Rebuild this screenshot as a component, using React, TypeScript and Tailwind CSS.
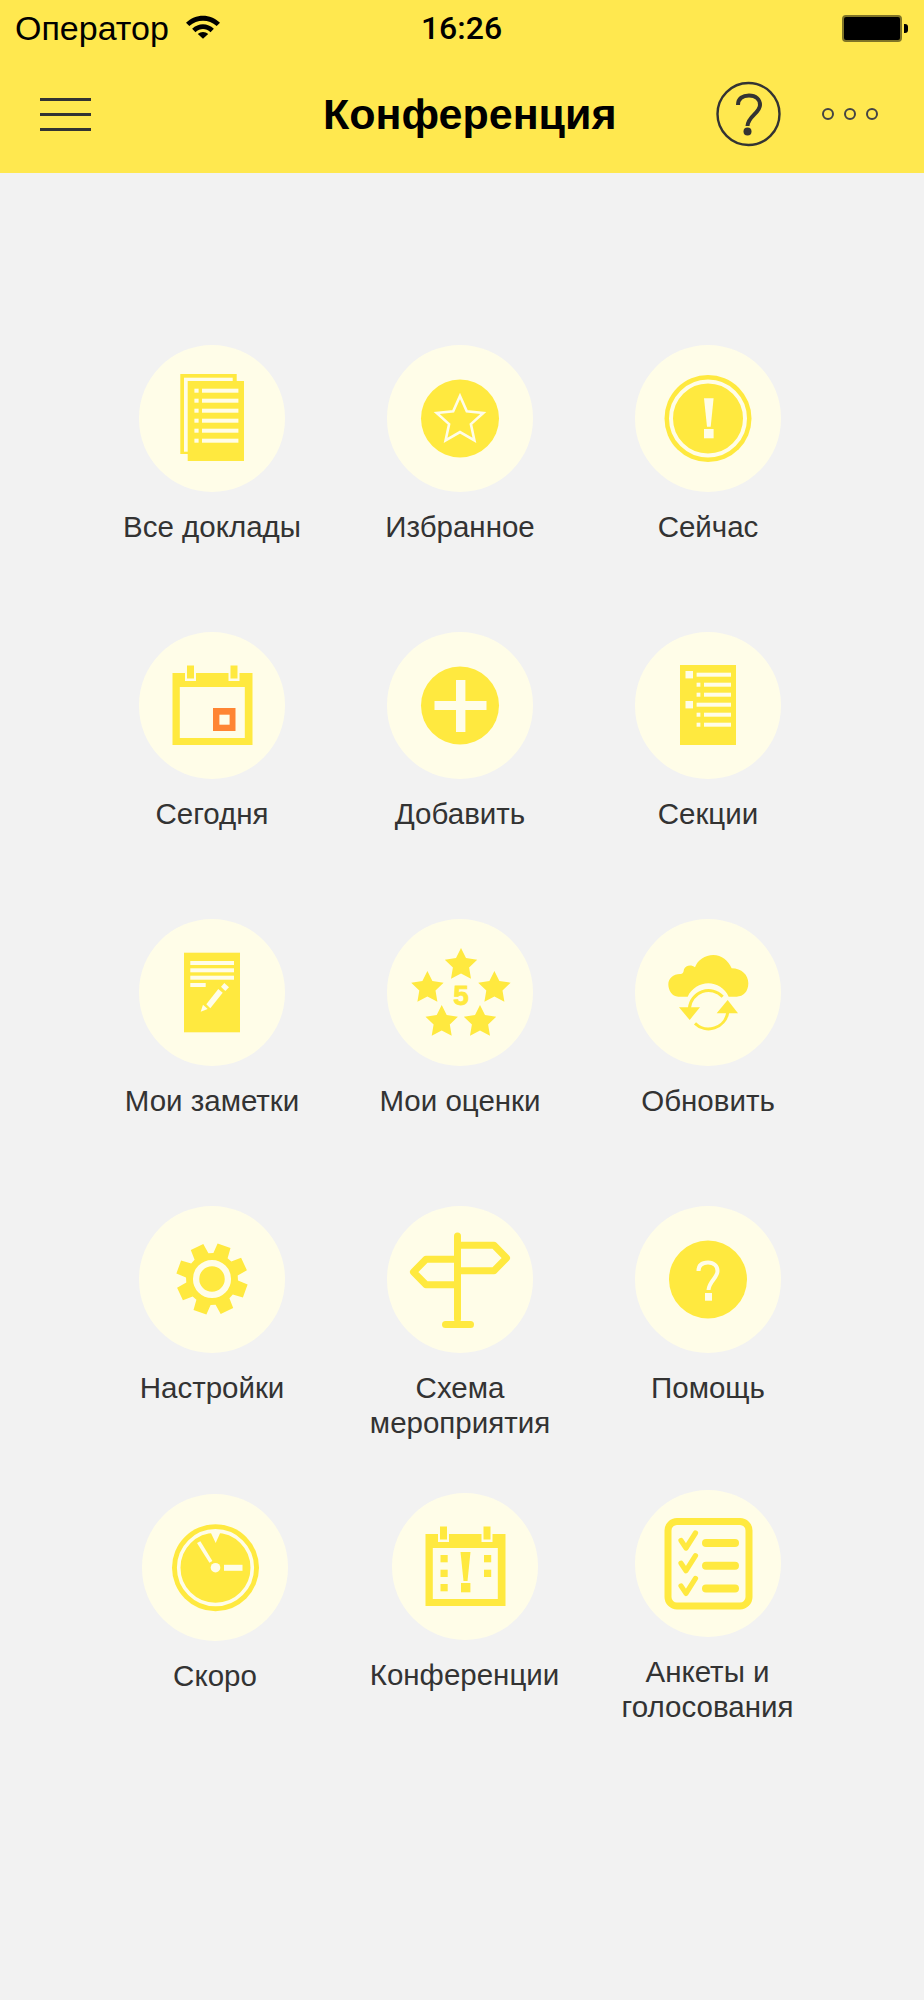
import React from "react";

const Y = "#FFE93F";
const C = "#FFFDE8";

function starPts(cx: number, cy: number, R: number, r: number) {
  const p: string[] = [];
  for (let i = 0; i < 10; i++) {
    const a = (-90 + i * 36) * (Math.PI / 180);
    const rad = i % 2 === 0 ? R : r;
    p.push(`${(cx + rad * Math.cos(a)).toFixed(1)},${(cy + rad * Math.sin(a)).toFixed(1)}`);
  }
  return p.join(" ");
}

function gearPath(cx: number, cy: number) {
  const n = 8;
  const out: string[] = [];
  for (let i = 0; i < n; i++) {
    const base = -70 + (i * 360) / n;
    const pts: [number, number][] = [
      [26, base - 17],
      [36, base - 11],
      [36, base + 11],
      [26, base + 17],
    ];
    for (const [r, d] of pts) {
      const a = (d * Math.PI) / 180;
      out.push(`${(cx + r * Math.cos(a)).toFixed(1)} ${(cy + r * Math.sin(a)).toFixed(1)}`);
    }
  }
  return "M" + out.join("L") + "Z";
}

const Svg = ({ children }: { children: React.ReactNode }) => (
  <svg viewBox="0 0 146 147" className="w-full h-full">{children}</svg>
);

const lines = [45.7, 55.7, 65.7, 75.7, 85.7, 95.7];

const AllIcon = () => (
  <Svg>
    <rect x="41.3" y="29" width="56.4" height="80" fill={Y} />
    <rect x="45" y="32.7" width="48.7" height="74" fill={C} />
    <rect x="48.7" y="36" width="56.3" height="80" fill={Y} />
    {lines.map((y) => (
      <g key={y} fill={C}>
        <rect x="55.4" y={y - 2} width="4.2" height="4" />
        <rect x="63" y={y - 2} width="36.4" height="4" />
      </g>
    ))}
  </Svg>
);

const FavIcon = () => (
  <Svg>
    <circle cx="73" cy="73.5" r="39" fill={Y} />
    <polygon points={starPts(73, 75.5, 24.5, 11.5)} fill="none" stroke={C} strokeWidth="2.6" />
  </Svg>
);

const NowIcon = () => (
  <Svg>
    <circle cx="73" cy="73.5" r="43.5" fill={Y} />
    <circle cx="73" cy="73.5" r="37" fill="none" stroke={C} strokeWidth="4" />
    <polygon points="69,53.3 78.6,53.3 75.7,81.7 72,81.7" fill={C} />
    <rect x="69" y="84" width="9.6" height="9.3" fill={C} />
  </Svg>
);

const CalFrame = ({ children }: { children?: React.ReactNode }) => (
  <Svg>
    <rect x="33.5" y="41" width="80" height="72" fill={Y} />
    <rect x="40.8" y="55" width="65" height="51" fill={C} />
    <rect x="46" y="32" width="11" height="17" fill={C} />
    <rect x="89.5" y="32" width="11" height="17" fill={C} />
    <rect x="48" y="33.5" width="7" height="13" fill={Y} />
    <rect x="91.5" y="33.5" width="7" height="13" fill={Y} />
    {children}
  </Svg>
);

const TodayIcon = () => (
  <CalFrame>
    <rect x="74" y="76" width="22.5" height="23" fill="#FF8533" />
    <rect x="80.4" y="82.7" width="10.2" height="10" fill={C} />
  </CalFrame>
);

const AddIcon = () => (
  <Svg>
    <circle cx="73" cy="73.5" r="39" fill={Y} />
    <rect x="47.5" y="69" width="52" height="9" fill={C} />
    <rect x="69" y="48" width="9.4" height="52" fill={C} />
  </Svg>
);

const SectionsIcon = () => (
  <Svg>
    <rect x="45" y="33" width="56" height="80" fill={Y} />
    {[42.7, 72.7].map((y) => (
      <g key={y} fill={C}>
        <rect x="50.5" y={y - 3.7} width="7.5" height="7.4" />
        <rect x="61.6" y={y - 2} width="34.4" height="4" />
      </g>
    ))}
    {[52.7, 62.7, 82.7, 92.7].map((y) => (
      <g key={y} fill={C}>
        <rect x="61.6" y={y - 2} width="3.8" height="4" />
        <rect x="69" y={y - 2} width="27" height="4" />
      </g>
    ))}
  </Svg>
);

const NotesIcon = () => (
  <Svg>
    <rect x="45" y="33.7" width="56" height="79.6" fill={Y} />
    {[44, 51.3, 58.7].map((y) => (
      <rect key={y} x="51.3" y={y - 2} width="43.7" height="4" fill={C} />
    ))}
    <rect x="51.3" y="64" width="15.4" height="4" fill={C} />
    <polygon points="61.7,92.7 64,85.7 68.7,90" fill={C} />
    <polygon points="67.3,85.3 79.3,70 83.7,73.7 71.3,89.3" fill={C} />
    <polygon points="82,67.7 85.3,64 90,68.3 86.3,72" fill={C} />
  </Svg>
);

const RatingsIcon = () => (
  <Svg>
    {[
      [74, 46],
      [40.4, 69],
      [107.4, 69],
      [54.7, 103],
      [93, 103],
    ].map(([x, y]) => (
      <polygon key={x} points={starPts(x, y, 17, 8.5)} fill={Y} />
    ))}
    <text x="74" y="86" textAnchor="middle" fontSize="28" fontWeight="700" fontFamily="'Liberation Sans', sans-serif" fill={Y} stroke={Y} strokeWidth="0.8">5</text>
  </Svg>
);

const RefreshIcon = () => (
  <Svg>
    <g transform="translate(15 21) scale(0.3333)">
      <path d="M85 170C65 170 55 150 55 133C55 115 70 102 90 102C98 102 100 100 102 88C106 78 122 72 135 82C143 60 165 45 190 45C215 45 235 62 245 85C275 85 295 105 295 130C295 155 280 170 260 170H236C225 145 200 130 175 130C150 130 125 145 113 170Z" fill={Y} />
      <path d="M118 205A58 58 0 0 1 218 170" fill="none" stroke={Y} strokeWidth="9" />
      <polygon points="87,202 150,202 119,240" fill={Y} />
      <path d="M233 218A58 58 0 0 1 135 250" fill="none" stroke={Y} strokeWidth="9" />
      <polygon points="200,220 264,220 233,180" fill={Y} />
    </g>
  </Svg>
);

const SettingsIcon = () => (
  <Svg>
    <path d={gearPath(73, 73)} fill={Y} />
    <circle cx="73" cy="73" r="15.9" fill="none" stroke={C} strokeWidth="6.3" />
  </Svg>
);

const MapIcon = () => (
  <Svg>
    <rect x="67" y="26.5" width="7" height="90" rx="3.5" fill={Y} />
    <rect x="55" y="115" width="32" height="7" rx="3.5" fill={Y} />
    <path d="M74 39.3H107L119.5 52L107 64.7H74" fill="none" stroke={Y} strokeWidth="7" strokeLinejoin="round" />
    <path d="M67 53.3H39L26.5 66L39 78.8H67" fill="none" stroke={Y} strokeWidth="7" strokeLinejoin="round" />
  </Svg>
);

const HelpIcon = () => (
  <Svg>
    <circle cx="73" cy="73.5" r="39" fill={Y} />
    <path d="M63.5 65C63.5 59 67.5 56.5 73 56.5C79 56.5 82.5 60 82.5 65C82.5 72 74 75 73.5 84" fill="none" stroke={C} strokeWidth="4" />
    <rect x="70" y="87" width="7" height="7.7" fill={C} />
  </Svg>
);

const SoonIcon = () => (
  <Svg>
    <circle cx="73.5" cy="73.7" r="43.5" fill={Y} />
    <circle cx="73.5" cy="73.7" r="36.8" fill="none" stroke={C} strokeWidth="3.6" />
    <polygon points="68,37 79,37 73.7,49" fill={C} />
    <polygon points="55,49 58.4,47.3 70.4,67 67.4,68.7" fill={C} />
    <circle cx="73.5" cy="73.7" r="4.8" fill={C} />
    <rect x="82" y="70.8" width="18.5" height="6" fill={C} />
  </Svg>
);

const ConfIcon = () => (
  <CalFrame>
    {[62, 76.7, 91].map((y) => (
      <rect key={y} x="48.5" y={y} width="7.2" height="7.3" fill={Y} />
    ))}
    {[62, 76.7].map((y) => (
      <rect key={y} x="92" y={y} width="7.2" height="7.3" fill={Y} />
    ))}
    <polygon points="68.5,59 78.5,59 75.5,88 71.5,88" fill={Y} />
    <rect x="69" y="90" width="9.4" height="9.3" fill={Y} />
  </CalFrame>
);

const PollIcon = () => (
  <Svg>
    <rect x="33" y="31.5" width="81" height="84.5" rx="9" fill="none" stroke={Y} strokeWidth="7" />
    {[0, 22.7, 45.4].map((d) => (
      <g key={d}>
        <path d={`M46 ${50.5 + d}L51 ${58 + d}L60.5 ${43 + d}`} fill="none" stroke={Y} strokeWidth="5.2" strokeLinecap="round" strokeLinejoin="round" />
        <rect x="67" y={49 + d} width="37" height="8" rx="4" fill={Y} />
      </g>
    ))}
  </Svg>
);

type Item = { label: React.ReactNode; icon: React.ReactNode; cell?: string };

const rows: { cls: string; items: Item[] }[] = [
  {
    cls: "h-[287px]",
    items: [
      { label: "Все доклады", icon: <AllIcon /> },
      { label: "Избранное", icon: <FavIcon /> },
      { label: "Сейчас", icon: <NowIcon /> },
    ],
  },
  {
    cls: "h-[287px]",
    items: [
      { label: "Сегодня", icon: <TodayIcon /> },
      { label: "Добавить", icon: <AddIcon /> },
      { label: "Секции", icon: <SectionsIcon /> },
    ],
  },
  {
    cls: "h-[287px]",
    items: [
      { label: "Мои заметки", icon: <NotesIcon /> },
      { label: "Мои оценки", icon: <RatingsIcon /> },
      { label: "Обновить", icon: <RefreshIcon /> },
    ],
  },
  {
    cls: "h-[287px]",
    items: [
      { label: "Настройки", icon: <SettingsIcon /> },
      { label: "Схема мероприятия", icon: <MapIcon /> },
      { label: "Помощь", icon: <HelpIcon /> },
    ],
  },
  {
    cls: "",
    items: [
      { label: "Скоро", icon: <SoonIcon />, cell: "pl-[6px] pt-[1px]" },
      { label: "Конференции", icon: <ConfIcon />, cell: "pl-[9px]" },
      { label: "Анкеты и голосования", icon: <PollIcon />, cell: "pr-[1px] -mt-[3px]" },
    ],
  },
];

function Cell({ item }: { item: Item }) {
  return (
    <div className={`w-[248px] flex flex-col items-center ${item.cell ?? ""}`}>
      <div className="w-[146px] h-[147px] rounded-full bg-[#FFFDE8] shrink-0">{item.icon}</div>
      <div className="mt-[17px] w-[220px] text-center text-[29.5px] leading-[35px] text-[#333333]">{item.label}</div>
    </div>
  );
}

export default function App() {
  return (
    <div className="w-[924px] h-[2000px] bg-[#F2F2F2] overflow-hidden font-['Liberation_Sans',Arial,sans-serif]">
      <header className="h-[173px] bg-[#FFE84F] flex flex-col">
        <div className="h-[56px] flex items-center pl-[15px] pr-[16px] text-black">
          <div className="flex-1 flex items-center gap-[17px]">
            <span className="text-[34px] leading-none">Оператор</span>
            <svg width="34" height="25" viewBox="0 0 36 26" className="-mt-[3px]">
              <path d="M0 9C10 -1 26 -1 36 9L32.5 12.5C24 5 12 5 3.5 12.5Z" fill="#000" />
              <path d="M6.5 15.5C13 9 23 9 29.5 15.5L26 19C21 14.5 15 14.5 10 19Z" fill="#000" />
              <path d="M12.5 21C15.5 18 20.5 18 23.5 21L18 26Z" fill="#000" />
            </svg>
          </div>
          <span className="text-[32px] leading-none font-medium font-['Roboto',sans-serif]">16:26</span>
          <div className="flex-1 flex items-center justify-end">
            <div className="w-[60px] h-[27px] rounded-[4px] bg-black border-2 border-[#7F7427]" />
            <div className="ml-[2px] w-[4px] h-[9px] rounded-r-[3px] bg-black" />
          </div>
        </div>
        <div className="flex-1 flex items-center pb-[1px]">
          <div className="ml-[40px] w-[51px] flex flex-col gap-[12px] flex-none">
            <div className="h-[3px] bg-[#333333]" />
            <div className="h-[3px] bg-[#333333]" />
            <div className="h-[3px] bg-[#333333]" />
          </div>
          <h1 className="ml-[232px] text-[43px] leading-none font-bold text-black whitespace-nowrap">Конференция</h1>
          <svg width="65" height="66" viewBox="0 0 65 66" className="ml-[99px] flex-none">
            <circle cx="32.5" cy="33" r="31" fill="none" stroke="#333333" strokeWidth="2.4" />
            <path d="M22 24C22 17 27 14.5 33 14.5C40 14.5 44 18.5 44 24C44 32 32 35 31.5 45" fill="none" stroke="#333333" strokeWidth="4" />
            <circle cx="31.5" cy="50.5" r="4" fill="#333333" />
          </svg>
          <div className="ml-[41px] flex gap-[10px] flex-none">
            <div className="w-[12px] h-[12px] rounded-full border-[2.5px] border-[#444444]" />
            <div className="w-[12px] h-[12px] rounded-full border-[2.5px] border-[#444444]" />
            <div className="w-[12px] h-[12px] rounded-full border-[2.5px] border-[#444444]" />
          </div>
        </div>
      </header>
      <main className="pt-[172px] pl-[88px]">
        {rows.map((r, i) => (
          <div key={i} className={`flex items-start ${r.cls}`}>
            {r.items.map((it, j) => (
              <Cell key={j} item={it} />
            ))}
          </div>
        ))}
      </main>
    </div>
  );
}
